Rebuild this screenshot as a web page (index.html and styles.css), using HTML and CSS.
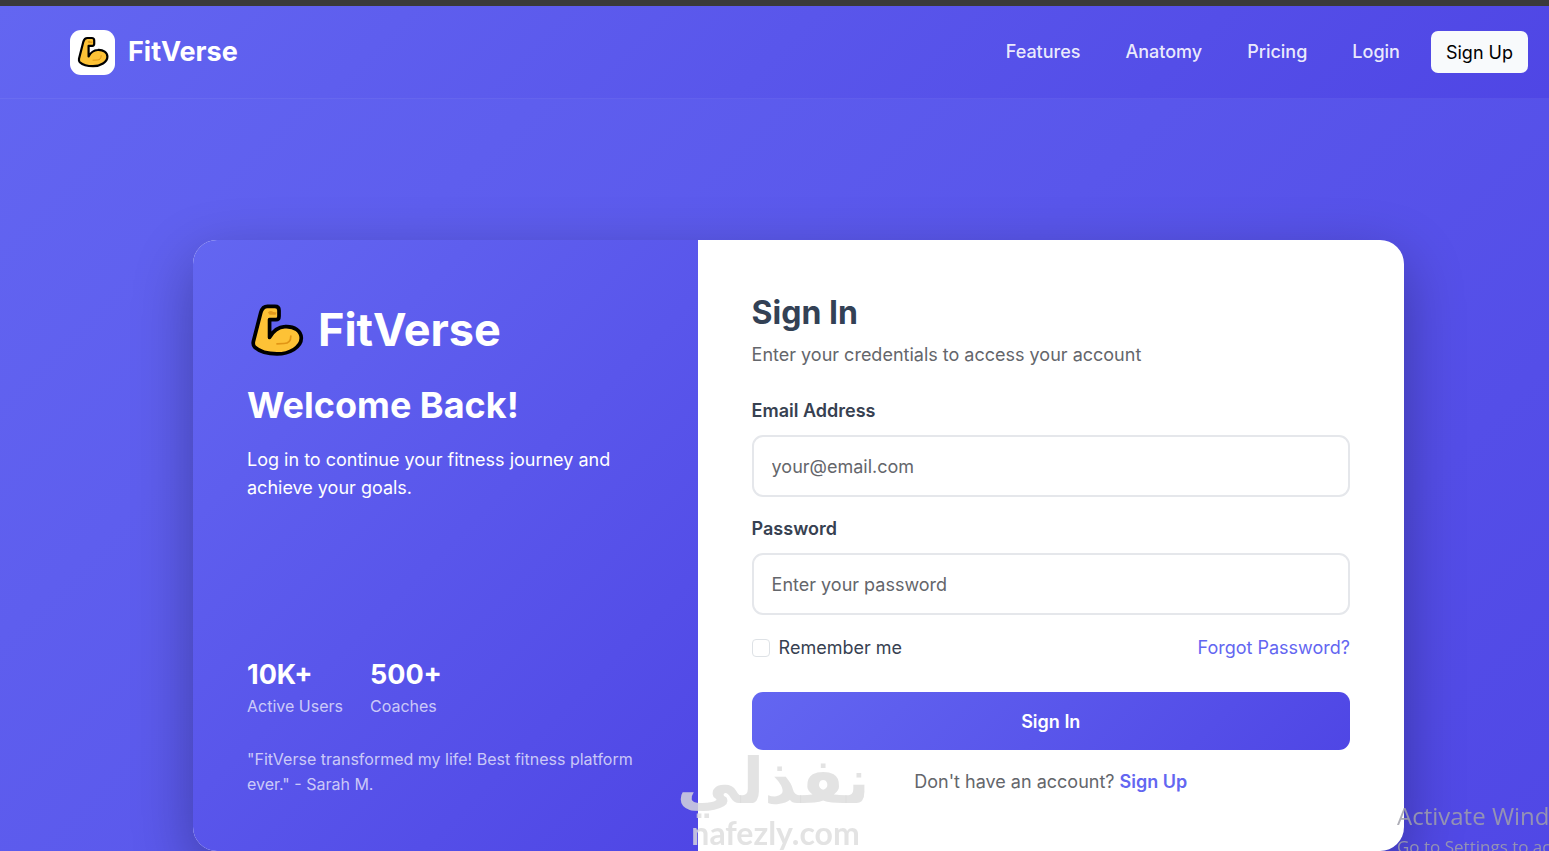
FILE: index.html
```html
<!DOCTYPE html>
<html lang="en">
<head>
  <meta charset="UTF-8">
  <meta name="viewport" content="width=device-width, initial-scale=1.0">
  <title>FitVerse - Sign In</title>
  <link rel="stylesheet" href="styles.css">
</head>
<body>
  <svg class="sprite" aria-hidden="true">
    <symbol id="muscle" viewBox="0 0 160 160">
      <path d="M32 28 Q37 10 52 10 L74 10 Q86 10 86 22 L86 39 Q86 49 77 49 L58 49 L58 102 C68 84 80 71 103 70 C132 68 152 83 152 104 C152 131 117 151 80 151 C50 151 26 142 14 131 Q8 125 10 114 Z" fill="#fdc236" stroke="#000" stroke-width="11" stroke-linejoin="round"/>
      <path d="M53 28 Q61 20 69 27 L79 28 L76 35 L58 35 Z" fill="#e39a1c"/>
      <path d="M121 98 Q121 120 101 120 L80 121" stroke="#e19515" stroke-width="5" stroke-linecap="round" fill="none"/>
    </symbol>
  </svg>

  <header class="navbar">
    <a href="#" class="brand">
      <span class="brand-icon"><svg><use href="#muscle"/></svg></span>
      FitVerse
    </a>
    <nav class="nav-links">
      <a href="#">Features</a>
      <a href="#">Anatomy</a>
      <a href="#">Pricing</a>
      <a href="#">Login</a>
      <button type="button" class="btn-signup">Sign Up</button>
    </nav>
  </header>

  <main>
    <div class="auth-card">
      <section class="welcome">
        <div>
          <div class="welcome-logo"><svg><use href="#muscle"/></svg> FitVerse</div>
          <h1>Welcome Back!</h1>
          <p>Log in to continue your fitness journey and achieve your goals.</p>
        </div>
        <div>
          <div class="stats">
            <div>
              <div class="stat-number">10K+</div>
              <div class="stat-label">Active Users</div>
            </div>
            <div>
              <div class="stat-number">500+</div>
              <div class="stat-label">Coaches</div>
            </div>
          </div>
          <p class="quote">"FitVerse transformed my life! Best fitness platform ever." - Sarah M.</p>
        </div>
      </section>

      <section class="form-side">
        <h2>Sign In</h2>
        <p class="subtitle">Enter your credentials to access your account</p>
        <form>
          <div class="form-group">
            <label for="email">Email Address</label>
            <input type="email" id="email" placeholder="your@email.com">
          </div>
          <div class="form-group">
            <label for="password">Password</label>
            <input type="password" id="password" placeholder="Enter your password">
          </div>
          <div class="form-options">
            <div class="remember">
              <input type="checkbox" id="remember">
              <label for="remember">Remember me</label>
            </div>
            <a href="#">Forgot Password?</a>
          </div>
          <button type="submit" class="btn-signin">Sign In</button>
        </form>
        <p class="switch">Don't have an account? <a href="#">Sign Up</a></p>
      </section>
    </div>
  </main>

  <div class="watermark">
    <div class="watermark-ar" lang="ar" dir="rtl">نفذلي</div>
    <div class="watermark-en">nafezly.com</div>
  </div>

  <div class="activate">
    <div class="activate-title">Activate Windows</div>
    <div class="activate-text">Go to Settings to activate Windows.</div>
  </div>
</body>
</html>
```
FILE: styles.css
```css
* {
  box-sizing: border-box;
  margin: 0;
  padding: 0;
}

body {
  font-family: Inter, sans-serif;
  font-size: 18px;
  line-height: 28px;
  min-height: 100vh;
  color: #374151;
  background: linear-gradient(135deg, #6366f1 0%, #4f46e5 100%);
  border-top: 6px solid #3a3a3a;
  overflow-x: hidden;
}

a {
  text-decoration: none;
}

button {
  font-family: inherit;
  font-size: 18px;
  border: none;
  cursor: pointer;
}

.sprite {
  display: none;
}

/* Navbar */
.navbar {
  display: flex;
  justify-content: space-between;
  align-items: center;
  height: 93px;
  padding: 0 21px 0 70px;
  background: linear-gradient(135deg, #6366f1 0%, #4f46e5 100%);
  border-bottom: 1px solid rgba(255, 255, 255, 0.05);
}

.brand {
  display: flex;
  align-items: center;
  gap: 13px;
  color: #fff;
  font-size: 27px;
  font-weight: 700;
}

.brand-icon {
  display: flex;
  align-items: center;
  justify-content: center;
  width: 45px;
  height: 45px;
  background: #fff;
  border-radius: 11px;
}

.brand-icon svg {
  width: 32px;
  height: 32px;
}

.nav-links {
  display: flex;
  align-items: center;
  gap: 45px;
}

.nav-links a {
  color: rgba(255, 255, 255, 0.9);
  font-weight: 500;
}

.btn-signup {
  height: 42px;
  margin-left: -14px;
  padding: 0 15px;
  background: #f8fafc;
  color: #000;
  border-radius: 7px;
}

/* Card */
main {
  padding: 141px 145px 141px 193px;
}

.auth-card {
  display: grid;
  grid-template-columns: 5fr 7fr;
  background: #fff;
  border-radius: 24px;
  overflow: hidden;
  box-shadow: 0 20px 60px rgba(0, 0, 0, 0.3);
}

.welcome {
  display: flex;
  flex-direction: column;
  justify-content: space-between;
  padding: 54px;
  color: #fff;
  background: linear-gradient(135deg, #6366f1 0%, #4f46e5 100%);
}

.welcome-logo {
  display: flex;
  align-items: center;
  gap: 11px;
  height: 72px;
  font-size: 45px;
  font-weight: 700;
}

.welcome-logo svg {
  width: 60px;
  height: 54px;
}

.welcome h1 {
  margin: 17px 0 19px;
  font-size: 36px;
  font-weight: 700;
  line-height: 44px;
}

.stats {
  display: flex;
  gap: 27px;
  margin-bottom: 28px;
}

.stat-number {
  font-size: 27px;
  font-weight: 700;
  line-height: 38px;
}

.stat-label,
.quote {
  font-size: 16px;
  line-height: 25px;
  color: rgba(255, 255, 255, 0.7);
}

.form-side {
  padding: 54px 54px 55px;
}

.form-side h2 {
  margin-bottom: 9px;
  font-size: 32px;
  font-weight: 700;
  line-height: 38px;
  color: #334155;
}

.subtitle {
  margin-bottom: 28px;
  color: #64666b;
}

.form-group {
  margin-bottom: 18px;
}

.form-group label {
  display: block;
  margin-bottom: 10px;
  font-weight: 600;
}

.form-group input {
  display: block;
  width: 100%;
  height: 62px;
  padding: 0 18px;
  font-family: inherit;
  font-size: 18px;
  border: 2px solid #e5e7eb;
  border-radius: 11px;
}

.form-group input::placeholder {
  color: #64666b;
}

.form-options {
  display: flex;
  justify-content: space-between;
  margin: 19px 0 30px;
}

.remember {
  display: flex;
  align-items: center;
  gap: 9px;
}

.remember input {
  appearance: none;
  width: 18px;
  height: 18px;
  border: 1px solid #dee2e6;
  border-radius: 4px;
}

.form-side a {
  color: #6366f1;
}

.btn-signin {
  display: block;
  width: 100%;
  height: 58px;
  color: #fff;
  font-weight: 600;
  background: linear-gradient(135deg, #6366f1 0%, #4f46e5 100%);
  border-radius: 11px;
}

.switch {
  margin-top: 18px;
  text-align: center;
  color: #64666b;
}

.switch a {
  font-weight: 600;
}

/* Overlays */
.watermark {
  position: fixed;
  left: 44%;
  bottom: 0;
  width: 188px;
  text-align: center;
  white-space: nowrap;
  color: rgba(220, 220, 220, 0.8);
  pointer-events: none;
}

.watermark-ar {
  font-family: "DejaVu Sans", sans-serif;
  font-size: 63px;
  font-weight: 700;
  line-height: 66px;
}

.watermark-en {
  font-family: Lato, sans-serif;
  font-size: 32px;
  font-weight: 700;
  line-height: 36px;
}

.activate {
  position: fixed;
  right: 0;
  bottom: -10px;
  width: 152px;
  overflow: hidden;
  white-space: nowrap;
  font-family: "Open Sans", sans-serif;
  color: rgba(160, 160, 170, 0.85);
  pointer-events: none;
}

.activate-title {
  font-size: 24px;
  line-height: 34px;
}

.activate-text {
  font-size: 17px;
  line-height: 28px;
}
```
